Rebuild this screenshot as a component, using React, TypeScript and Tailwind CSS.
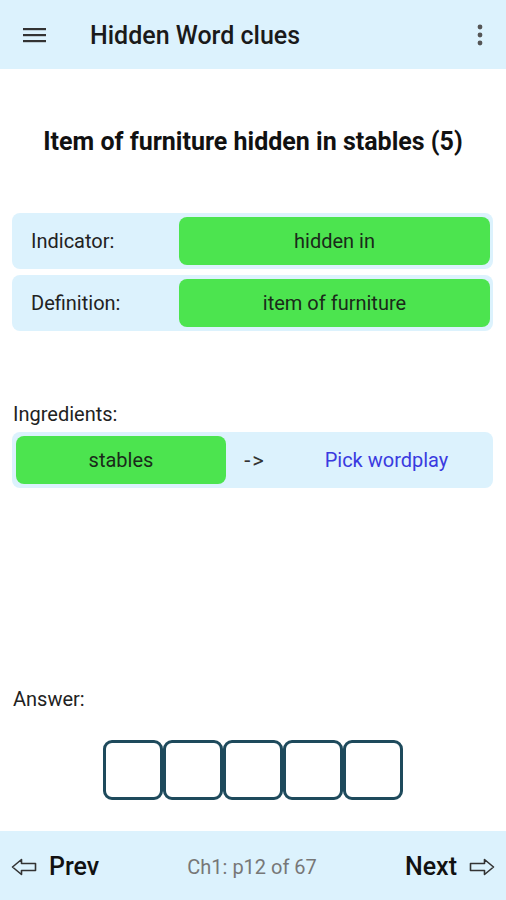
import React from "react";

const font = { fontFamily: "Roboto, 'Noto Sans', sans-serif" };

function Row({ label, value }: { label: string; value: string }) {
  return (
    <div className="mx-[12px] mr-[13px] flex h-[56px] items-center rounded-[8px] bg-[#dcf2fd] py-[4px] pr-[3px]">
      <div className="w-[167px] pl-[19px] text-[20px] text-[#222]">{label}</div>
      <div className="flex h-[48px] flex-1 items-center justify-center rounded-[8px] bg-[#4ce44f] text-[20px] text-[#1a2a1a]">
        {value}
      </div>
    </div>
  );
}

function ArrowLeft() {
  return (
    <svg width="26" height="18" viewBox="0 0 26 18">
      <path d="M1.5 9 L10.5 1.5 L10.5 5.5 L24.5 5.5 L24.5 12.5 L10.5 12.5 L10.5 16.5 Z" fill="none" stroke="#333" strokeWidth="1.6" strokeLinejoin="round" />
    </svg>
  );
}

function ArrowRight() {
  return (
    <svg width="26" height="18" viewBox="0 0 26 18">
      <path d="M24.5 9 L15.5 1.5 L15.5 5.5 L1.5 5.5 L1.5 12.5 L15.5 12.5 L15.5 16.5 Z" fill="none" stroke="#333" strokeWidth="1.6" strokeLinejoin="round" />
    </svg>
  );
}

export default function App() {
  return (
    <div className="flex h-[900px] w-[506px] flex-col bg-white" style={font}>
      <header className="flex h-[69px] shrink-0 items-center bg-[#dcf2fd]">
        <svg className="ml-[23px]" width="23" height="16" viewBox="0 0 23 16">
          <rect x="0" y="1" width="23" height="2.2" fill="#333" />
          <rect x="0" y="7" width="23" height="2.2" fill="#333" />
          <rect x="0" y="13" width="23" height="2.2" fill="#333" />
        </svg>
        <div className="ml-[44px] pt-[2px] text-[25px] font-medium text-[#1a1a1a]">Hidden Word clues</div>
        <div className="flex-1" />
        <svg className="mr-[23px]" width="6" height="22" viewBox="0 0 6 22">
          <circle cx="3" cy="3" r="2.4" fill="#555" />
          <circle cx="3" cy="11" r="2.4" fill="#555" />
          <circle cx="3" cy="19" r="2.4" fill="#555" />
        </svg>
      </header>

      <main className="flex flex-1 flex-col">
        <div className="mt-[58px] text-center text-[25px] font-bold leading-[30px] text-[#111]">
          Item of furniture hidden in stables (5)
        </div>

        <div className="mt-[56px] flex flex-col gap-[6px]">
          <Row label="Indicator:" value="hidden in" />
          <Row label="Definition:" value="item of furniture" />
        </div>

        <div className="ml-[13px] mt-[71px] text-[20px] leading-[24px] text-[#222]">Ingredients:</div>
        <div className="mx-[12px] mr-[13px] mt-[6px] flex h-[56px] items-center rounded-[8px] bg-[#dcf2fd] px-[4px] py-[4px]">
          <div className="flex h-[48px] w-[210px] items-center justify-center rounded-[8px] bg-[#4ce44f] text-[20px] text-[#1a2a1a]">
            stables
          </div>
          <div className="w-[58px] text-center text-[22px] tracking-[2px] text-[#333]">-&gt;</div>
          <div className="flex-1 text-center text-[20px] text-[#3a3ae0]">Pick wordplay</div>
        </div>

        <div className="flex-1" />

        <div className="ml-[13px] text-[20px] leading-[24px] text-[#222]">Answer:</div>
        <div className="mb-[31px] mt-[29px] flex justify-center">
          {[0, 1, 2, 3, 4].map((i) => (
            <div
              key={i}
              className="h-[60px] w-[60px] rounded-[9px] border-[3px] border-[#1e4a5c] bg-white"
            />
          ))}
        </div>
      </main>

      <footer className="flex h-[69px] shrink-0 items-center bg-[#dcf2fd] px-[11px] pt-[2px]">
        <div className="flex items-center gap-[12px]">
          <ArrowLeft />
          <span className="text-[25px] font-medium text-[#111]">Prev</span>
        </div>
        <div className="flex-1 text-center text-[20px] text-[#777]">Ch1: p12 of 67</div>
        <div className="flex items-center gap-[12px]">
          <span className="text-[25px] font-medium text-[#111]">Next</span>
          <ArrowRight />
        </div>
      </footer>
    </div>
  );
}
